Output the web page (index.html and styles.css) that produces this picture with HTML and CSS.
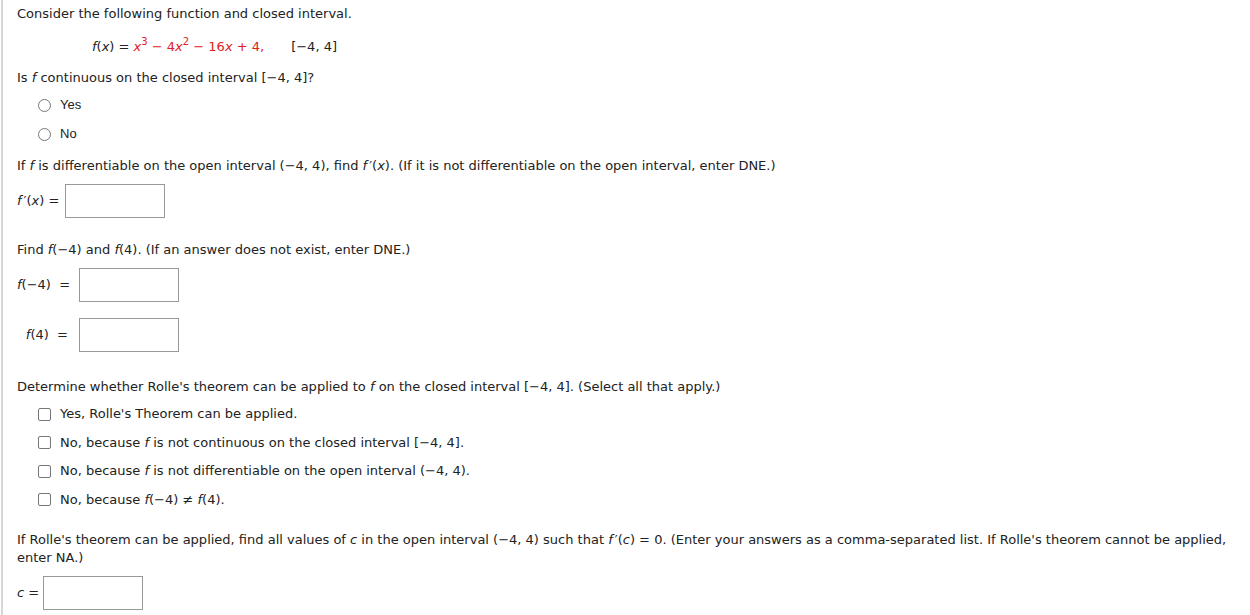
FILE: index.html
```html
<!DOCTYPE html>
<html>
<head>
<meta charset="utf-8">
<link rel="stylesheet" href="styles.css">
</head>
<body>
<div class="page">
  <p class="line l1">Consider the following function and closed interval.</p>
  <p class="line formula"><i>f</i>(<i>x</i>) = <span class="red"><i>x</i><sup>3</sup> − 4<i>x</i><sup>2</sup> − 16<i>x</i> + 4,</span><span class="gap"></span>[−4, 4]</p>
  <p class="line l3">Is <i>f</i> continuous on the closed interval [−4, 4]?</p>
  <div class="options">
    <label class="opt"><span class="radio"></span><span class="optlabel">Yes</span></label>
    <label class="opt"><span class="radio"></span><span class="optlabel">No</span></label>
  </div>
  <p class="line l4">If <i>f</i> is differentiable on the open interval (−4, 4), find <i class="fp">f</i>′(<i>x</i>). (If it is not differentiable on the open interval, enter DNE.)</p>
  <div class="answer a1"><span class="alabel"><i class="fp">f</i>′(<i>x</i>) =</span><span class="box"></span></div>
  <p class="line l5">Find <i>f</i>(−4) and <i>f</i>(4). (If an answer does not exist, enter DNE.)</p>
  <div class="pair">
    <div class="answer"><span class="alabel wide"><i>f</i>(−4)&nbsp; =</span><span class="box"></span></div>
    <div class="answer"><span class="alabel wide"><i>f</i>(4)&nbsp; =</span><span class="box"></span></div>
  </div>
  <p class="line l6">Determine whether Rolle's theorem can be applied to <i>f</i> on the closed interval [−4, 4]. (Select all that apply.)</p>
  <div class="checks">
    <div class="chk"><span class="cbox"></span><span>Yes, Rolle's Theorem can be applied.</span></div>
    <div class="chk"><span class="cbox"></span><span>No, because <i>f</i> is not continuous on the closed interval [−4, 4].</span></div>
    <div class="chk"><span class="cbox"></span><span>No, because <i>f</i> is not differentiable on the open interval (−4, 4).</span></div>
    <div class="chk"><span class="cbox"></span><span>No, because <i>f</i>(−4) ≠ <i>f</i>(4).</span></div>
  </div>
  <p class="line l7">If Rolle's theorem can be applied, find all values of <i>c</i> in the open interval (−4, 4) such that <i class="fp">f</i>′(<i>c</i>) = 0. (Enter your answers as a comma-separated list. If Rolle's theorem cannot be applied, enter NA.)</p>
  <div class="answer a3"><span class="alabel"><i>c</i> =</span><span class="box"></span></div>
</div>
</body>
</html>
```
FILE: styles.css
```css
html, body {
  margin: 0;
  padding: 0;
  background: #fff;
}
body {
  font-family: "DejaVu Sans", Verdana, sans-serif;
  font-size: 13px;
  color: #222;
  line-height: 18px;
}
.page {
  border-left: 2px solid #d6d6d6;
  margin-left: 1px;
  padding: 5px 0 0 14px;
  min-height: 615px;
  box-sizing: border-box;
}
.line {
  margin: 0;
}
i {
  font-style: italic;
}
.fp {
  margin-right: 2px;
}
sup {
  font-size: 10px;
  line-height: 0;
  vertical-align: 6px;
}
.formula {
  margin-top: 15px;
  padding-left: 75px;
}
.red {
  color: #e0201c;
}
.gap {
  display: inline-block;
  width: 27px;
}
.l3 {
  margin-top: 13px;
}
.options {
  display: flex;
  flex-direction: column;
  gap: 11px;
  margin-top: 9px;
  padding-left: 21px;
}
.opt {
  display: flex;
  align-items: center;
  gap: 9px;
  font-family: "Liberation Sans", Arial, sans-serif;
  font-size: 13px;
}
.radio {
  width: 11px;
  height: 11px;
  border: 1px solid #777;
  border-radius: 50%;
  background: #fff;
}
.l4 {
  margin-top: 14px;
}
.answer {
  display: flex;
  align-items: center;
}
.a1 {
  margin-top: 9px;
}
.a1 .alabel {
  padding-right: 6px;
}
.alabel {
  padding-right: 4px;
}
.alabel.wide {
  width: 62px;
  text-align: right;
  padding-right: 11px;
  box-sizing: border-box;
  white-space: nowrap;
}
.box {
  display: block;
  width: 98px;
  height: 32px;
  border: 1px solid #999;
  background: #fff;
}
.l5 {
  margin-top: 23px;
}
.pair {
  display: flex;
  flex-direction: column;
  gap: 16px;
  margin-top: 9px;
}
.l6 {
  margin-top: 26px;
}
.checks {
  display: flex;
  flex-direction: column;
  gap: 10.5px;
  margin-top: 9px;
  padding-left: 21px;
}
.chk {
  display: flex;
  align-items: center;
  gap: 9px;
}
.cbox {
  width: 11px;
  height: 11px;
  border: 1px solid #777;
  border-radius: 2px;
  background: #fff;
}
.l7 {
  margin-top: 22px;
  padding-right: 4px;
}
.a3 {
  margin-top: 9px;
}
```
